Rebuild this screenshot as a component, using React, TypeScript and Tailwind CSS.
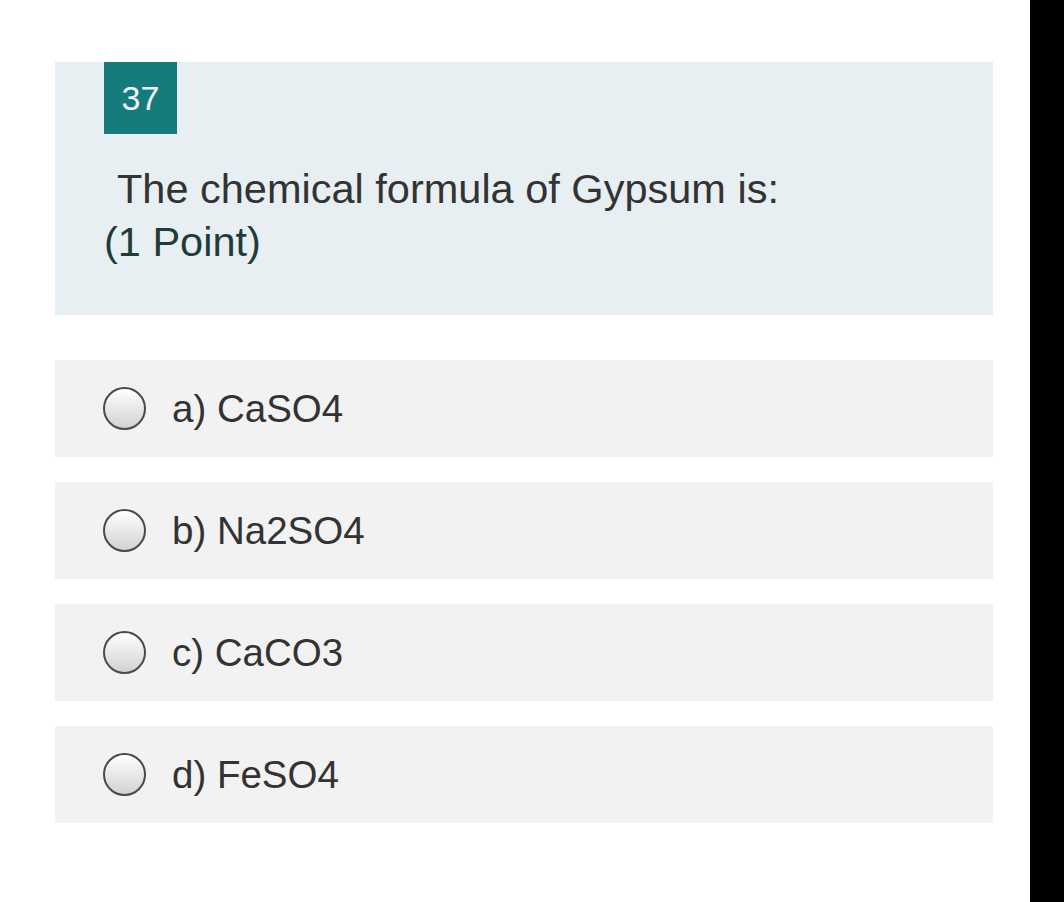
export default function App() {
  const options = ["a) CaSO4", "b) Na2SO4", "c) CaCO3", "d) FeSO4"];
  return (
    <div className="flex h-[902px] w-[1064px] overflow-hidden bg-white" style={{ fontFamily: '"Liberation Sans", Arial, sans-serif' }}>
      <div className="flex-1 pl-[55px] pr-[37px] pt-[62px]">
        <div className="h-[253px] w-[938px] bg-[#e7eff2] pl-[49px]">
          <div className="flex h-[72px] w-[73px] items-center justify-center bg-[#167b7d] text-[34px] text-[#eef6f6]">37</div>
          <div className="mt-[28px] text-[41.5px] leading-[53px] text-[#333333]">
            <p className="pl-[13px]">The chemical formula of Gypsum is:</p>
            <p className="text-[#1f3b3a]">(1 Point)</p>
          </div>
        </div>
        <div className="mt-[45px] flex w-[938px] flex-col gap-[25px]">
          {options.map((o) => (
            <div key={o} className="flex h-[97px] items-center bg-[#f2f2f2] pl-[48px]">
              <span className="h-[43px] w-[43px] rounded-full border-2 border-[#4a4a4a] bg-gradient-to-b from-[#ffffff] to-[#d2d2d2]" />
              <span className="ml-[26px] text-[38.5px] text-[#333333]">{o}</span>
            </div>
          ))}
        </div>
      </div>
      <div className="h-full w-[34px] bg-black" />
    </div>
  );
}
